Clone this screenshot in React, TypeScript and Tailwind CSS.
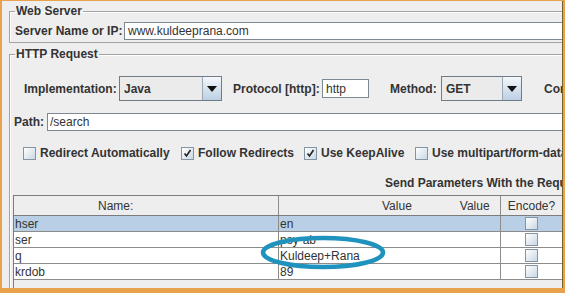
import React from "react";

const font = { fontFamily: '"Liberation Sans", Arial, sans-serif' };

function Combo({ value, width }: { value: string; width: string }) {
  return (
    <div
      className={`${width} flex h-[25px] shrink-0 border border-[#6f7b86] shadow-[inset_1px_1px_0_#9aa4ad]`}
    >
      <div className="flex flex-1 items-center bg-[#ebebeb] pl-[4px] text-[12px] font-bold text-[#333]">
        {value}
      </div>
      <div className="flex w-[19px] items-center justify-center border-l border-[#9aa8b5] bg-gradient-to-b from-[#f4f7fa] to-[#bcd0e3]">
        <svg width="10" height="6" viewBox="0 0 10 6">
          <path d="M0 0h10L5 6z" fill="#111" />
        </svg>
      </div>
    </div>
  );
}

function Box({ checked }: { checked?: boolean }) {
  return (
    <span className="flex h-[13px] w-[13px] shrink-0 items-center justify-center border border-[#8594a2] bg-gradient-to-br from-white to-[#c9d7e4]">
      {checked ? (
        <svg width="9" height="9" viewBox="0 0 9 9">
          <path d="M1.5 4.5l2 2.5 4-6" fill="none" stroke="#222" strokeWidth="1.6" />
        </svg>
      ) : null}
    </span>
  );
}

function Check({ label, checked, width }: { label: string; checked?: boolean; width: string }) {
  return (
    <div className={`${width} flex shrink-0 items-center gap-[4px] whitespace-nowrap`}>
      <Box checked={checked} />
      <span className="text-[12px] font-bold text-[#333]">{label}</span>
    </div>
  );
}

const rows = [
  { name: "hser", value: "en", sel: true },
  { name: "ser", value: "psy-ab" },
  { name: "q", value: "Kuldeep+Rana" },
  { name: "krdob", value: "89" },
];

export default function App() {
  return (
    <div className="h-[293px] w-[565px] bg-[#e9a24c] pb-[5px] pl-[2px] pr-[2px] pt-[1px]" style={font}>
      <div className="relative h-full overflow-hidden border-r border-[#76622f] bg-[#eeeeee] text-[#333]">
        {/* Web Server */}
        <fieldset className="ml-[7px] mt-[3px] w-[600px] border border-[#a3a3a3] pb-[2px] shadow-[inset_1px_1px_0_#fff]">
          <legend className="ml-[5px] px-[1px] text-[12px] font-bold leading-[14px]">Web Server</legend>
          <div className="mt-[4px] flex items-center pl-[5px]">
            <span className="w-[109px] shrink-0 text-[12px] font-bold">Server Name or IP:</span>
            <div className="flex h-[18px] flex-1 items-center border border-[#7d8893] bg-white pl-[3px] text-[12px]">
              www.kuldeeprana.com
            </div>
          </div>
        </fieldset>

        {/* HTTP Request */}
        <fieldset className="ml-[7px] mt-[4px] h-[260px] w-[600px] border border-[#a3a3a3] shadow-[inset_1px_1px_0_#fff]">
          <legend className="ml-[5px] px-[1px] text-[12px] font-bold leading-[14px]">HTTP Request</legend>

          <div className="mt-[15px] flex items-center whitespace-nowrap pl-[14px] text-[12px] font-bold">
            <span className="w-[95px] shrink-0">Implementation:</span>
            <Combo value="Java" width="w-[103px]" />
            <span className="ml-[11px] w-[89px] shrink-0">Protocol [http]:</span>
            <div className="flex h-[19px] w-[47px] shrink-0 items-center border border-[#7d8893] bg-white pl-[3px] font-normal">
              http
            </div>
            <span className="ml-[21px] w-[51px] shrink-0">Method:</span>
            <Combo value="GET" width="w-[81px]" />
            <span className="ml-[22px]">Content encoding:</span>
          </div>

          <div className="mt-[12px] flex items-center pl-[4px]">
            <span className="w-[33px] shrink-0 text-[12px] font-bold">Path:</span>
            <div className="flex h-[18px] flex-1 items-center border border-[#7d8893] bg-white pl-[2px] text-[12px]">
              /search
            </div>
          </div>

          <div className="mt-[13px] flex items-center pl-[13px]">
            <Check label="Redirect Automatically" width="w-[158px]" />
            <Check label="Follow Redirects" checked width="w-[123px]" />
            <Check label="Use KeepAlive" checked width="w-[111px]" />
            <Check label="Use multipart/form-data for HTTP POST" width="w-[260px]" />
          </div>

          <div className="mt-[14px] whitespace-nowrap pl-[375px] text-[12px] font-bold leading-[14px]">
            Send Parameters With the Request:
          </div>

          {/* parameters table */}
          <div className="ml-[3px] mt-[5px] h-[120px] w-[549px] border-l border-t border-[#7c7c7c] text-[12px]">
            <div className="flex h-[20px] border-b border-[#7c7c7c]">
              <div className="flex w-[265px] items-center border-r border-[#8c8c8c] pl-[84px]">Name:</div>
              <div className="flex w-[222px] items-center border-r border-[#8c8c8c] pl-[103px]">
                <span>Value</span>
                <span className="ml-[48px]">Value</span>
              </div>
              <div className="flex w-[61px] items-center justify-center">Encode?</div>
            </div>
            {rows.map((r) => (
              <div
                key={r.name}
                className={`flex h-[16px] border-b border-[#8c8c8c] ${r.sel ? "bg-[#b8cfe5]" : "bg-white"}`}
              >
                <div className="flex w-[265px] items-center border-r border-[#8c8c8c] pl-[1px]">{r.name}</div>
                <div className="flex w-[222px] items-center border-r border-[#8c8c8c] pl-[1px]">{r.value}</div>
                <div className="flex w-[61px] items-center justify-center">
                  <Box />
                </div>
              </div>
            ))}
          </div>
        </fieldset>

        {/* highlight drawn over the table */}
        <svg className="pointer-events-none absolute left-[256px] top-[231px]" width="132" height="42" viewBox="0 0 132 42">
          <ellipse cx="65" cy="20.5" rx="60" ry="14.5" fill="none" stroke="#1f93bd" strokeWidth="4.5" />
        </svg>
      </div>
    </div>
  );
}
